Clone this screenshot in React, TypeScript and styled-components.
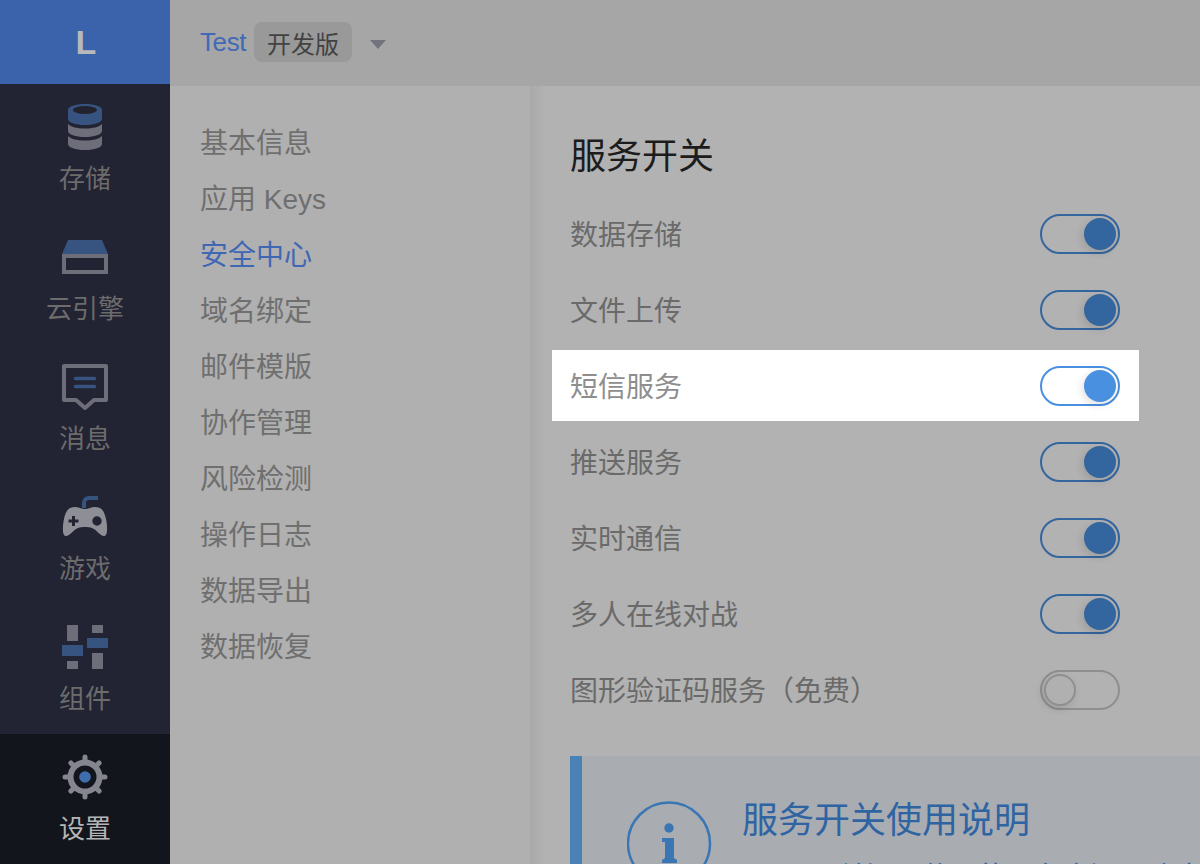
import styled, { createGlobalStyle } from "styled-components";

const GlobalStyle = createGlobalStyle`
  html, body {
    margin: 0;
    padding: 0;
    height: 100%;
    overflow: hidden;
    background: #b0b0b0;
  }
  #root {
    height: 100%;
  }
`;

const FONT = `"Liberation Sans", "Noto Sans CJK SC", sans-serif`;

const navItems = [
  { label: "存储", icon: <StorageIcon /> },
  { label: "云引擎", icon: <EngineIcon /> },
  { label: "消息", icon: <MessageIcon /> },
  { label: "游戏", icon: <GameIcon /> },
  { label: "组件", icon: <WidgetIcon /> },
];

const menu = [
  "基本信息",
  "应用 Keys",
  "安全中心",
  "域名绑定",
  "邮件模版",
  "协作管理",
  "风险检测",
  "操作日志",
  "数据导出",
  "数据恢复",
];

const services = [
  { name: "数据存储", on: true },
  { name: "文件上传", on: true },
  { name: "短信服务", on: true, focus: true },
  { name: "推送服务", on: true },
  { name: "实时通信", on: true },
  { name: "多人在线对战", on: true },
  { name: "图形验证码服务（免费）", on: false },
];

function StorageIcon() {
  return (
    <svg width="34" height="46" viewBox="0 0 34 46">
      <path
        d="M0 32c3 3 9 4.5 17 4.5S31 35 34 32v8c0 3.5-7.6 6-17 6S0 43.5 0 40zM0 20c3 3 9 4.5 17 4.5S31 23 34 20v7c0 3.5-7.6 6-17 6S0 30.5 0 27z"
        fill="#6e6e7a"
      />
      <path d="M0 6c0-3.5 7.6-6 17-6s17 2.5 17 6v9c0 3.5-7.6 6-17 6S0 18.5 0 15z" fill="#36547f" />
      <ellipse cx="17" cy="6" rx="12" ry="4" fill="#22232f" />
    </svg>
  );
}

function EngineIcon() {
  return (
    <svg width="46" height="34" viewBox="0 0 46 34">
      <path d="M6 0h34l6 14H0z" fill="#36547f" />
      <path d="M0 14h46v20H0zM4 18v12h38V18z" fill="#6e6e7a" fillRule="evenodd" />
    </svg>
  );
}

function MessageIcon() {
  return (
    <svg width="46" height="46" viewBox="0 0 46 46">
      <path
        d="M2 2h42v34H32l-9 8-9-8H2z"
        fill="none"
        stroke="#6e6e7a"
        strokeWidth="4"
        strokeLinejoin="round"
      />
      <path d="M13.5 14.5h19M13.5 22.5h19" stroke="#36547f" strokeWidth="3.5" strokeLinecap="round" />
    </svg>
  );
}

function GameIcon() {
  return (
    <svg width="46" height="42" viewBox="0 0 46 42">
      <path d="M22 12V7c0-3 2-5 5-5h9" fill="none" stroke="#36547f" strokeWidth="4" />
      <path
        fillRule="evenodd"
        fill="#8e8e96"
        d="M13 11c4 0 6 2 10 2s6-2 10-2c6 0 9 3 11 12 1.5 7 2 17-2 17-4 0-7-6-12-8-4-1.3-10-1.3-14 0-5 2-8 8-12 8-4 0-3.500-10-2-17C4 14 7 11 13 11zM10 20v3.500H6.500v3H10V30h3v-3.500h3.500v-3H13V20zM35 20.300a4.700 4.700 0 1 0 0 9.400 4.700 4.700 0 0 0 0-9.400z"
      />
    </svg>
  );
}

function WidgetIcon() {
  return (
    <svg width="46" height="44" viewBox="0 0 46 44">
      <g fill="#6e6e7a">
        <rect x="5" y="0" width="11" height="16" />
        <rect x="5" y="36" width="11" height="8" />
        <rect x="30" y="0" width="11" height="8" />
        <rect x="30" y="28" width="11" height="16" />
      </g>
      <g fill="#36547f">
        <rect x="0" y="20" width="21" height="11" />
        <rect x="25" y="13" width="21" height="10" />
      </g>
    </svg>
  );
}

function GearIcon() {
  return (
    <svg width="46" height="46" viewBox="0 0 46 46">
      <g stroke="#85858f" strokeWidth="5" strokeLinecap="round">
        <path d="M23 3v40M3 23h40M8.900 8.900l28.200 28.200M37.100 8.900 8.900 37.100" />
      </g>
      <circle cx="23" cy="23" r="14.500" fill="#13151d" stroke="#85858f" strokeWidth="6" />
      <circle cx="23" cy="23" r="5.800" fill="#3f6cab" />
    </svg>
  );
}

function InfoIcon() {
  return (
    <svg width="85" height="85" viewBox="0 0 85 85">
      <circle cx="42" cy="42.500" r="41" fill="none" stroke="#3a76b4" strokeWidth="2.500" />
      <circle cx="42" cy="27" r="4.700" fill="#3a76b4" />
      <path d="M35 37h12v20l3 2v3H35v-3l3-2V41h-3z" fill="#3a76b4" />
    </svg>
  );
}

export default function App() {
  return (
    <Page>
      <GlobalStyle />
      <Sidebar>
        <Logo>L</Logo>
        <NavList>
          {navItems.map((item) => (
            <NavItem key={item.label}>
              <NavIcon>{item.icon}</NavIcon>
              <NavLabel>{item.label}</NavLabel>
            </NavItem>
          ))}
        </NavList>
        <SettingsItem>
          <NavIcon>
            <GearIcon />
          </NavIcon>
          <SettingsLabel>设置</SettingsLabel>
        </SettingsItem>
      </Sidebar>
      <Main>
        <Header>
          <AppName>Test</AppName>
          <Badge>开发版</Badge>
          <Caret />
        </Header>
        <Body>
          <SideMenu>
            {menu.map((name) => (
              <MenuItem key={name} $active={name === "安全中心"}>
                {name}
              </MenuItem>
            ))}
          </SideMenu>
          <Content>
            <Title>服务开关</Title>
            <Rows>
              {services.map((s) => (
                <Row key={s.name} $focus={s.focus}>
                  <RowName $focus={s.focus}>{s.name}</RowName>
                  <Switch $on={s.on} $focus={s.focus}>
                    <Knob $on={s.on} $focus={s.focus} />
                  </Switch>
                </Row>
              ))}
            </Rows>
            <Notice>
              <InfoSlot>
                <InfoIcon />
              </InfoSlot>
              <NoticeText>
                <NoticeTitle>服务开关使用说明</NoticeTitle>
                <NoticeList>
                  <li>可以关闭不使用的服务资源，防止被恶意调用</li>
                </NoticeList>
              </NoticeText>
            </Notice>
          </Content>
        </Body>
      </Main>
    </Page>
  );
}

const Page = styled.div`
  display: flex;
  width: 1200px;
  height: 864px;
  overflow: hidden;
  font-family: ${FONT};
  background: #b0b0b0;
`;

const Sidebar = styled.aside`
  width: 170px;
  flex: none;
  display: flex;
  flex-direction: column;
  background: #222333;
`;

const Logo = styled.div`
  height: 84px;
  padding-left: 2px;
  box-sizing: border-box;
  display: flex;
  align-items: center;
  justify-content: center;
  background: #3a63ab;
  color: #b9b9b9;
  font-size: 34px;
  font-weight: 700;
`;

const NavList = styled.nav`
  flex: 1;
  display: flex;
  flex-direction: column;
`;

const NavItem = styled.div`
  height: 130px;
  display: flex;
  flex-direction: column;
  align-items: center;
  padding-top: 19px;
  box-sizing: border-box;
`;

const NavIcon = styled.div`
  height: 48px;
  display: flex;
  align-items: center;
  justify-content: center;
`;

const NavLabel = styled.div`
  margin-top: 10px;
  font-size: 26px;
  line-height: 36px;
  color: #6c6c6c;
`;

const SettingsItem = styled(NavItem)`
  background: #13151d;
`;

const SettingsLabel = styled(NavLabel)`
  color: #b5b5b5;
`;

const Main = styled.div`
  flex: 1;
  min-width: 0;
  display: flex;
  flex-direction: column;
`;

const Header = styled.header`
  height: 86px;
  flex: none;
  display: flex;
  align-items: center;
  padding: 0 0 2px 30px;
  box-sizing: border-box;
  background: #a6a6a6;
`;

const AppName = styled.span`
  font-size: 26px;
  letter-spacing: -0.4px;
  color: #4169b8;
`;

const Badge = styled.span`
  margin-left: 8px;
  width: 98px;
  height: 40px;
  display: flex;
  align-items: center;
  justify-content: center;
  border-radius: 8px;
  background: #999999;
  color: #424242;
  font-size: 24px;
`;

const Caret = styled.span`
  margin-left: 18px;
  margin-top: 4px;
  border-top: 9px solid #73737f;
  border-left: 8px solid transparent;
  border-right: 8px solid transparent;
`;

const Body = styled.div`
  flex: 1;
  min-height: 0;
  display: flex;
`;

const SideMenu = styled.div`
  width: 360px;
  flex: none;
  display: flex;
  flex-direction: column;
  padding: 27px 0 0 30px;
  box-sizing: border-box;
`;

const MenuItem = styled.div<{ $active?: boolean }>`
  height: 56px;
  flex: none;
  display: flex;
  align-items: center;
  font-size: 28px;
  color: ${(p) => (p.$active ? "#3f67b4" : "#6f6f6f")};
`;

const Content = styled.div`
  flex: 1;
  min-width: 0;
  padding: 46px 0 0 40px;
  box-sizing: border-box;
  background: linear-gradient(90deg, #a9a9a9, #b2b2b2 15px);
`;

const Title = styled.h2`
  margin: 0;
  font-size: 36px;
  line-height: 50px;
  font-weight: 400;
  color: #1c1c1c;
`;

const Rows = styled.div`
  margin-top: 14px;
  display: flex;
  flex-direction: column;
  width: 550px;
`;

const Row = styled.div<{ $focus?: boolean }>`
  height: 76px;
  box-sizing: border-box;
  display: flex;
  align-items: center;
  justify-content: space-between;
  ${(p) =>
    p.$focus
      ? `
    background: #fff;
    margin: 2px -19px 3px -18px;
    height: 71px;
    padding: 1px 19px 0 18px;
  `
      : ""}
`;

const RowName = styled.span<{ $focus?: boolean }>`
  padding-bottom: 2px;
  font-size: 28px;
  color: ${(p) => (p.$focus ? "#8e8e8e" : "#6a6a6a")};
`;

const Switch = styled.div<{ $on: boolean; $focus?: boolean }>`
  width: 80px;
  height: 40px;
  box-sizing: border-box;
  padding: 2px;
  border-radius: 20px;
  display: flex;
  justify-content: ${(p) => (p.$on ? "flex-end" : "flex-start")};
  border: 2px solid
    ${(p) => (!p.$on ? "#8f8f8f" : p.$focus ? "#4a90e0" : "#33659f")};
`;

const Knob = styled.span<{ $on: boolean; $focus?: boolean }>`
  width: 32px;
  height: 32px;
  box-sizing: border-box;
  border-radius: 50%;
  background: ${(p) => (!p.$on ? "#b0b0b0" : p.$focus ? "#4a90e0" : "#33659f")};
  border: ${(p) => (p.$on ? "none" : "2px solid #8f8f8f")};
  box-shadow: -2px 3px 8px rgba(0, 0, 0, 0.12);
`;

const Notice = styled.div`
  margin-top: 28px;
  height: 260px;
  display: flex;
  gap: 30px;
  padding: 45px 0 0 45px;
  box-sizing: border-box;
  border-left: 12px solid #4a82b8;
  background: #a9acb1;
`;

const InfoSlot = styled.div`
  flex: none;
  width: 85px;
  height: 85px;
`;

const NoticeText = styled.div`
  color: #2f64a3;
`;

const NoticeTitle = styled.div`
  font-size: 36px;
  line-height: 40px;
`;

const NoticeList = styled.ul`
  margin: 14px 0 0;
  padding: 0 0 0 40px;
  white-space: nowrap;
  font-size: 28px;
`;
